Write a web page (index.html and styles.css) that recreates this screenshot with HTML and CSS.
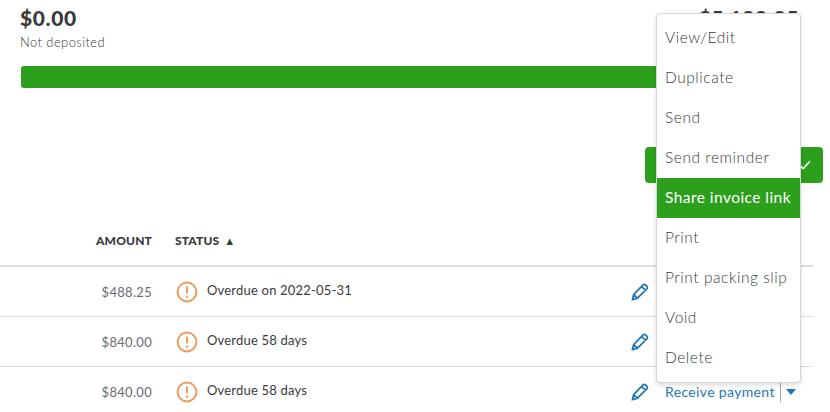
FILE: index.html
```html
<!DOCTYPE html>
<html lang="en">
<head>
  <meta charset="UTF-8">
  <meta name="viewport" content="width=device-width, initial-scale=1">
  <title>Invoices</title>
  <link rel="stylesheet" href="styles.css">
</head>
<body>

  <div class="summary">
    <div class="totals">
      <div>
        <div class="total">$0.00</div>
        <div class="total-label">Not deposited</div>
      </div>
      <div class="total">$5,188.25</div>
    </div>
    <div class="progress"></div>
  </div>

  <div class="toolbar">
    <button class="batch-btn" type="button">
      <svg class="check" width="12" height="10" viewBox="0 0 12 10"><path d="M1 5.5 L4.2 8.5 L11 1.2" fill="none" stroke="#fff" stroke-width="1.6"/></svg>
    </button>
  </div>

  <div class="table">
    <div class="row head">
      <div class="amount">AMOUNT</div>
      <div class="status">STATUS <span class="sort">▲</span></div>
    </div>
    <div class="row">
      <div class="amount">$488.25</div>
      <div class="status">
        <svg class="warn" width="22" height="22" viewBox="0 0 22 22"><circle cx="11" cy="11" r="9.4" fill="none" stroke="#ee9a5b" stroke-width="2"/><path d="M11 5.6 V12.2" stroke="#ee9a5b" stroke-width="2"/><circle cx="11" cy="15.6" r="1.2" fill="#ee9a5b"/></svg>
        <span class="status-text">Overdue on 2022-05-31</span>
      </div>
      <div class="action">
        <svg class="pencil" width="18" height="18" viewBox="0 0 18 18"><path d="M1.5 16.5 L2.6 11.6 L11.8 2.2 Q13 1 14.4 1.8 L15.8 3 Q17 4.4 15.8 5.8 L6.4 15.2 Z M10.6 3.6 L14.6 7.4 M2.6 11.6 L6.4 15.2" fill="none" stroke="#1f76b4" stroke-width="1.7"/></svg>
      </div>
    </div>
    <div class="row">
      <div class="amount">$840.00</div>
      <div class="status">
        <svg class="warn" width="22" height="22" viewBox="0 0 22 22"><circle cx="11" cy="11" r="9.4" fill="none" stroke="#ee9a5b" stroke-width="2"/><path d="M11 5.6 V12.2" stroke="#ee9a5b" stroke-width="2"/><circle cx="11" cy="15.6" r="1.2" fill="#ee9a5b"/></svg>
        <span class="status-text">Overdue 58 days</span>
      </div>
      <div class="action">
        <svg class="pencil" width="18" height="18" viewBox="0 0 18 18"><path d="M1.5 16.5 L2.6 11.6 L11.8 2.2 Q13 1 14.4 1.8 L15.8 3 Q17 4.4 15.8 5.8 L6.4 15.2 Z M10.6 3.6 L14.6 7.4 M2.6 11.6 L6.4 15.2" fill="none" stroke="#1f76b4" stroke-width="1.7"/></svg>
      </div>
    </div>
    <div class="row">
      <div class="amount">$840.00</div>
      <div class="status">
        <svg class="warn" width="22" height="22" viewBox="0 0 22 22"><circle cx="11" cy="11" r="9.4" fill="none" stroke="#ee9a5b" stroke-width="2"/><path d="M11 5.6 V12.2" stroke="#ee9a5b" stroke-width="2"/><circle cx="11" cy="15.6" r="1.2" fill="#ee9a5b"/></svg>
        <span class="status-text">Overdue 58 days</span>
      </div>
      <div class="action">
        <svg class="pencil" width="18" height="18" viewBox="0 0 18 18"><path d="M1.5 16.5 L2.6 11.6 L11.8 2.2 Q13 1 14.4 1.8 L15.8 3 Q17 4.4 15.8 5.8 L6.4 15.2 Z M10.6 3.6 L14.6 7.4 M2.6 11.6 L6.4 15.2" fill="none" stroke="#1f76b4" stroke-width="1.7"/></svg>
        <a class="receive">Receive payment</a>
        <span class="caret"></span>
      </div>
    </div>
  </div>

  <ul class="menu">
    <li>View/Edit</li>
    <li>Duplicate</li>
    <li>Send</li>
    <li>Send reminder</li>
    <li class="active">Share invoice link</li>
    <li>Print</li>
    <li>Print packing slip</li>
    <li>Void</li>
    <li>Delete</li>
  </ul>

</body>
</html>
```

FILE: styles.css
```css
* { margin: 0; padding: 0; box-sizing: border-box; }
html, body {
  height: 412px;
  overflow: hidden;
}
body {
  font-family: 'Lato', sans-serif;
  background: #fff;
  color: #393a3d;
  position: relative;
}

/* Top summary */
.summary {
  padding: 6px 31px 0 21px;
}
.totals {
  display: flex;
  justify-content: space-between;
  height: 60px;
}
.total {
  margin-left: -1px;
  font-size: 21px;
  font-weight: 900;
  line-height: 24px;
  letter-spacing: 0.6px;
  color: #393a3d;
}
.total-label {
  margin-top: 2px;
  margin-left: -1px;
  font-size: 13px;
  font-weight: 300;
  line-height: 20px;
  letter-spacing: 0.4px;
  color: #393a3d;
}
.progress {
  height: 22px;
  background: #2ca01c;
  border-radius: 3px;
}

/* Green button behind the menu */
.toolbar {
  display: flex;
  justify-content: flex-end;
  padding: 59px 7px 0 0;
}
.batch-btn {
  width: 178px;
  height: 36px;
  background: #2ca01c;
  border: none;
  border-radius: 4px;
  display: flex;
  align-items: center;
  justify-content: flex-end;
  padding-right: 12px;
}

/* Table */
.table {
  margin-top: 33px;
  width: 813px;
}
.row {
  display: flex;
  align-items: center;
  height: 50px;
  border-bottom: 1px solid #dcdcdc;
  font-size: 13px;
}
.row.head {
  height: 51px;
  border-bottom: 2px solid #dcdcdc;
  font-size: 12px;
  font-weight: 900;
  letter-spacing: 0.15px;
  color: #393a3d;
}
.amount {
  width: 152px;
  text-align: right;
  letter-spacing: 0.3px;
  color: #6b6c72;
}
.head .amount {
  letter-spacing: 0.15px;
  color: #393a3d;
}
.status {
  display: flex;
  align-items: center;
  margin-left: 23px;
  width: 457px;
}
.status-text {
  margin-top: -3px;
  letter-spacing: 0.2px;
}
.sort {
  font-size: 11px;
  margin-left: 5px;
}
.warn {
  margin-right: 9px;
  margin-left: 1px;
}
.action {
  display: flex;
  align-items: center;
}
.pencil {
  flex-shrink: 0;
  margin-left: -1px;
}
.receive {
  margin-left: 16px;
  padding-right: 5px;
  border-right: 1px solid #a8a8a8;
  color: #1f76b4;
  font-size: 14px;
  letter-spacing: 0.35px;
  line-height: 20px;
  white-space: nowrap;
}
.caret {
  margin-left: 5px;
  border-top: 6px solid #1f76b4;
  border-left: 5px solid transparent;
  border-right: 5px solid transparent;
}

/* Dropdown menu over the page */
.menu {
  position: absolute;
  left: 656px;
  top: 13px;
  width: 145px;
  padding: 4px 0 4px;
  list-style: none;
  background: #fff;
  border: 1px solid #d4d7dc;
  border-radius: 4px;
  box-shadow: 0 2px 4px rgba(0,0,0,0.15);
}
.menu li {
  height: 40px;
  line-height: 38px;
  padding-left: 8px;
  font-size: 15.5px;
  font-weight: 300;
  letter-spacing: 0.55px;
  color: #393a3d;
  white-space: nowrap;
}
.menu li.active {
  background: #2ca01c;
  font-weight: 400;
  letter-spacing: 0.45px;
  color: #fff;
}
```
